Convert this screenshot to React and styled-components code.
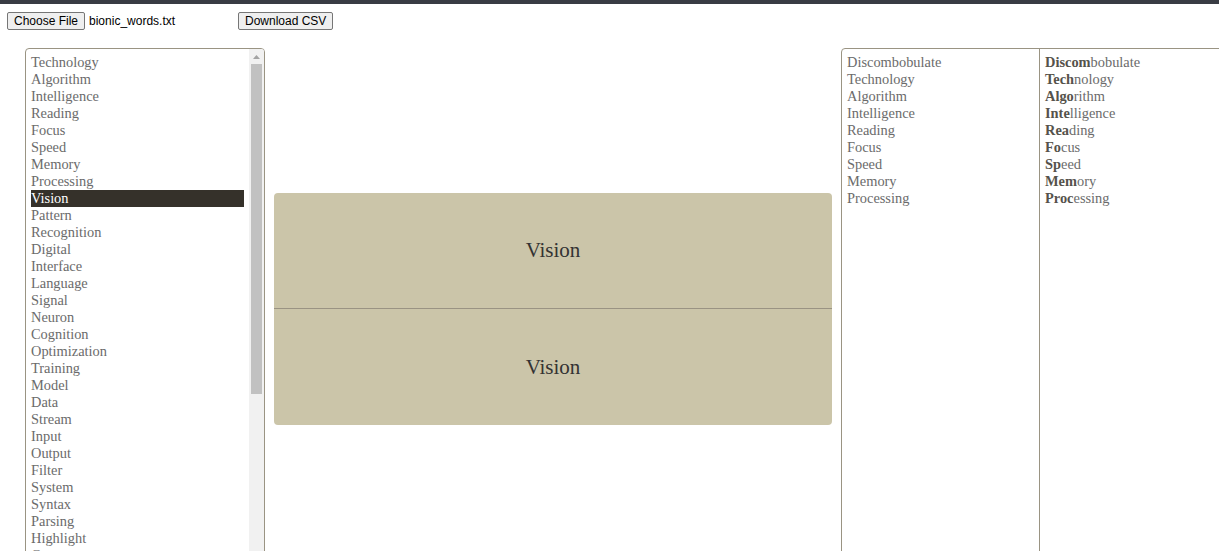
import styled, { createGlobalStyle } from 'styled-components';

const GlobalStyle = createGlobalStyle`
  html, body { margin: 0; padding: 0; overflow: hidden; background: #fff; }
  body { border-top: 4px solid #393c44; }
`;

const wordList = [
  'Technology', 'Algorithm', 'Intelligence', 'Reading', 'Focus', 'Speed', 'Memory',
  'Processing', 'Vision', 'Pattern', 'Recognition', 'Digital', 'Interface', 'Language',
  'Signal', 'Neuron', 'Cognition', 'Optimization', 'Training', 'Model', 'Data', 'Stream',
  'Input', 'Output', 'Filter', 'System', 'Syntax', 'Parsing', 'Highlight', 'Context',
  'Semantic', 'Network', 'Analysis', 'Learning', 'Attention', 'Feature', 'Vector',
  'Matrix', 'Encoding', 'Decoding', 'Token', 'Sequence', 'Logic', 'Insight', 'Discombobulate',
];

// [bold part, rest]
const bionicWords = [
  ['Discom', 'bobulate'], ['Tech', 'nology'], ['Algo', 'rithm'], ['Inte', 'lligence'],
  ['Rea', 'ding'], ['Fo', 'cus'], ['Sp', 'eed'], ['Mem', 'ory'], ['Proc', 'essing'],
];

const Page = styled.div`
  font-family: 'Liberation Serif', 'Times New Roman', serif;
`;

const Toolbar = styled.div`
  display: flex;
  align-items: center;
  height: 18px;
  padding: 8px 0 0 7px;
  font-family: 'Liberation Sans', Arial, sans-serif;
  font-size: 12px;
`;

const FilePicker = styled.div`
  display: flex;
  align-items: center;
  width: 231px;
  gap: 4px;
`;

const NativeButton = styled.button`
  font-family: 'Liberation Sans', Arial, sans-serif;
  font-size: 12px;
  color: #000;
  background: #efefef;
  border: 1px solid #767676;
  border-radius: 2px;
  padding: 1px 6px;
  height: 18px;
  line-height: 14px;
  margin: 0;
`;

const FileName = styled.span`
  color: #000;
`;

const Workspace = styled.div`
  display: flex;
  align-items: stretch;
  gap: 9px;
  height: 522px;
  margin: 18px 0 0 25px;
  width: 1212px;
`;

const WordBox = styled.div`
  flex: 0 0 240px;
  display: flex;
  box-sizing: border-box;
  border: 1px solid #9a9483;
  border-radius: 4px 4px 0 0;
  overflow: hidden;
  background: #fff;
`;

const WordScroller = styled.div`
  flex: 1;
  overflow: hidden;
  padding: 5px;
`;

const ScrollRail = styled.div`
  flex: 0 0 15px;
  display: flex;
  flex-direction: column;
  background: #f1f1f1;
`;

const ScrollArrow = styled.div`
  height: 15px;
  display: flex;
  align-items: center;
  justify-content: center;
`;

const ScrollThumb = styled.div`
  height: 330px;
  margin: 0 2px;
  background: #c1c1c1;
`;

const WordItem = styled.div`
  font-size: 14.4px;
  line-height: 17px;
  color: ${(p) => (p.$active ? '#fff' : '#6b6b6b')};
  background: ${(p) => (p.$active ? '#35312a' : 'transparent')};
  white-space: nowrap;
`;

const Viewer = styled.div`
  flex: 0 0 558px;
  align-self: center;
  display: flex;
  flex-direction: column;
  background: #cbc5a9;
  border-radius: 4px;
  overflow: hidden;
`;

const ViewerHalf = styled.div`
  height: ${(p) => p.$h}px;
  display: flex;
  align-items: center;
  justify-content: center;
  font-size: 21px;
  color: #333;
  border-top: ${(p) => (p.$divider ? '1px solid #9a9383' : 'none')};
`;

const Columns = styled.div`
  flex: 0 0 398px;
  display: flex;
  box-sizing: border-box;
  border: 1px solid #9a9483;
  border-radius: 4px 4px 0 0;
`;

const Column = styled.div`
  flex: 0 0 ${(p) => (p.$divider ? '198px' : 'auto')};
  padding: 5px;
  box-sizing: border-box;
  border-right: ${(p) => (p.$divider ? '1px solid #9a9483' : 'none')};
`;

const ColItem = styled.div`
  font-size: 14.4px;
  line-height: 17px;
  color: #6b6b6b;
  white-space: nowrap;

  b {
    color: #55524b;
    font-weight: bold;
  }
`;

export default function App() {
  return (
    <Page>
      <GlobalStyle />
      <Toolbar>
        <FilePicker>
          <NativeButton>Choose File</NativeButton>
          <FileName>bionic_words.txt</FileName>
        </FilePicker>
        <NativeButton>Download CSV</NativeButton>
      </Toolbar>
      <Workspace>
        <WordBox>
          <WordScroller>
            {wordList.map((w, i) => (
              <WordItem key={i} $active={w === 'Vision'}>{w}</WordItem>
            ))}
          </WordScroller>
          <ScrollRail>
            <ScrollArrow>
              <svg width="7" height="4" viewBox="0 0 7 4">
                <path d="M0 4 L3.5 0 L7 4 Z" fill="#a3a3a3" />
              </svg>
            </ScrollArrow>
            <ScrollThumb />
          </ScrollRail>
        </WordBox>
        <Viewer>
          <ViewerHalf $h={115}>Vision</ViewerHalf>
          <ViewerHalf $h={116} $divider>Vision</ViewerHalf>
        </Viewer>
        <Columns>
          <Column $divider>
            {bionicWords.map(([a, b], i) => (
              <ColItem key={i}>{a + b}</ColItem>
            ))}
          </Column>
          <Column>
            {bionicWords.map(([a, b], i) => (
              <ColItem key={i}><b>{a}</b>{b}</ColItem>
            ))}
          </Column>
        </Columns>
      </Workspace>
    </Page>
  );
}
